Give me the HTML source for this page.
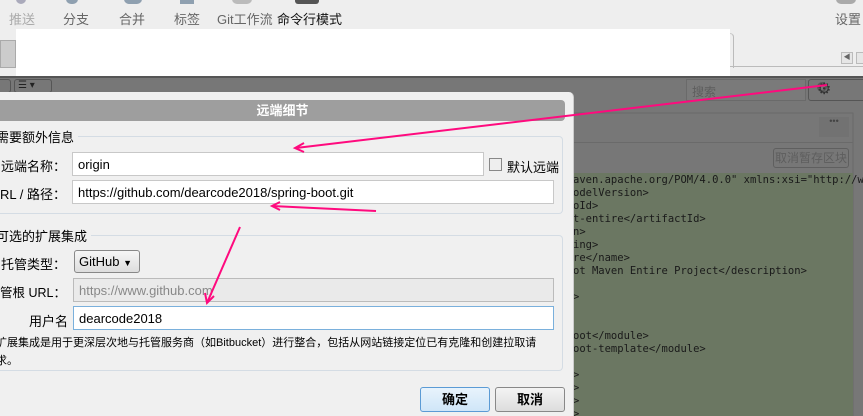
<!DOCTYPE html>
<html><head><meta charset="utf-8"><style>
*{margin:0;padding:0;box-sizing:border-box}
html,body{width:863px;height:416px;overflow:hidden}
body{position:relative;background:#eeeeee;font-family:"Liberation Sans","Noto Sans CJK SC",sans-serif;font-size:13px;color:#000}
.a{position:absolute}
.tb{font-size:13px;color:#666;top:9px}
.inp{position:absolute;background:#fff;border:1px solid #c8c8c8;height:24px;font-size:13px;padding:4px 5px;white-space:nowrap;overflow:hidden}
.lbl{position:absolute;font-size:13px;text-align:right;white-space:nowrap}
.code{position:absolute;left:573px;font-family:"DejaVu Sans Mono","Liberation Mono",monospace;font-size:10.5px;color:#1a1a1a;white-space:pre;line-height:13px}
</style></head><body>
<svg class="a" style="left:0;top:0" width="863" height="416">
<rect x="0" y="76" width="863" height="340" fill="#777777"/>
<rect x="573" y="113" width="280" height="303" fill="none" stroke="#6a6a6a"/>
<rect x="573" y="173" width="280" height="243" fill="#6b7762"/>
<rect x="0" y="76" width="863" height="2" fill="#555555"/>
</svg>
<div class="a" style="left:16px;top:-6px;width:10px;height:10px;border-radius:5px;background:#aab"></div>
<div class="a" style="left:66px;top:-6px;width:12px;height:10px;border-radius:5px;background:#8fa0b0"></div>
<div class="a" style="left:124px;top:-6px;width:18px;height:10px;border-radius:5px;background:#8fa0b0"></div>
<div class="a" style="left:180px;top:-6px;width:14px;height:10px;background:#8fa0b0"></div>
<div class="a" style="left:232px;top:-6px;width:20px;height:10px;border-radius:5px;background:#bbb"></div>
<div class="a" style="left:295px;top:-6px;width:24px;height:10px;border-radius:3px;background:#555"></div>
<div class="a" style="left:836px;top:-6px;width:20px;height:10px;border-radius:5px;background:#aaa"></div>
<div class="a tb" style="left:9px;color:#aaa">推送</div>
<div class="a tb" style="left:63px">分支</div>
<div class="a tb" style="left:119px">合并</div>
<div class="a tb" style="left:174px">标签</div>
<div class="a tb" style="left:217px">Git工作流</div>
<div class="a tb" style="left:277px;color:#111">命令行模式</div>
<div class="a tb" style="left:835px">设置</div>
<div class="a" style="left:0;top:40px;width:16px;height:28px;background:#ccc;border:1px solid #aaa"></div>
<div class="a" style="left:16px;top:29px;width:714px;height:47px;background:#fff"></div>
<div class="a" style="left:730px;top:33px;width:4px;height:35px;border-right:1px solid #bbb;border-top:1px solid #ccc;border-top-right-radius:4px"></div>
<div class="a" style="left:730px;top:66px;width:133px;height:1px;background:#bbb"></div>
<div class="a" style="left:841px;top:52px;width:12px;height:12px;border:1px solid #bbb;background:#e6e6e6;font-size:7px;color:#666;text-align:center;line-height:10px">◀</div>
<div class="a" style="left:856px;top:52px;width:8px;height:12px;border:1px solid #bbb;background:#e6e6e6"></div>
<div class="a" style="left:-4px;top:79px;width:15px;height:14px;border:1px solid #555;border-radius:3px"></div>
<div class="a" style="left:14px;top:79px;width:38px;height:14px;border:1px solid #555;border-radius:3px;font-size:10px;color:#222;line-height:12px;padding-left:3px">☰ ▾</div>
<div class="a" style="left:686px;top:79px;width:120px;height:22px;border:1px solid #6a6a6a;background:#7a7a7a;color:#5e5e5e;font-size:12px;padding:3px 5px">搜索</div>
<div class="a" style="left:817px;top:82px;width:10px;height:10px;border:2px solid #5a5a5a;border-radius:50%"></div>
<div class="a" style="left:808px;top:79px;width:60px;height:22px;border:1px solid #555;border-radius:3px;font-size:16px;color:#333;padding-left:8px;line-height:20px">⚙</div>
<div class="a" style="left:819px;top:117px;width:30px;height:20px;background:#727272;color:#444;font-size:9px;text-align:center;line-height:8px">•••</div>
<div class="a" style="left:573px;top:142px;width:280px;height:1px;background:#6a6a6a"></div>
<div class="a" style="left:773px;top:148px;width:76px;height:20px;border:1px solid #5f5f5f;border-radius:3px;color:#5e5e5e;font-size:12px;text-align:center;line-height:18px">取消暂存区块</div>
<div class="code" style="top:174px">aven.apache.org/POM/4.0.0" xmlns:xsi="http://ww
odelVersion>
oId>
t-entire&lt;/artifactId>
n>
ing>
re&lt;/name>
ot Maven Entire Project&lt;/description>

>


oot&lt;/module>
oot-template&lt;/module>

>
>
>
></div>
<div class="a" style="left:0;top:92px;width:574px;height:324px;background:#f0f0f0;border-top-right-radius:5px;border-right:1px solid #ccc"></div>
<div class="a" style="left:0;top:100px;width:565px;height:21px;background:#9e9e9e;border-radius:0 4px 4px 0;color:#fff;font-weight:bold;font-size:13px;text-align:center;line-height:21px">远端细节</div>
<div class="a" style="left:0;top:136px;width:563px;height:78px;border:1px solid #d4dce4;border-left:none;border-radius:0 4px 4px 0"></div>
<div class="a" style="left:-4px;top:127px;background:#f0f0f0;padding:0 4px 0 0;font-size:13px">需要额外信息</div>
<div class="lbl" style="right:797px;top:156px">远端名称：</div>
<div class="inp" style="left:72px;top:152px;width:412px">origin</div>
<div class="a" style="left:489px;top:158px;width:13px;height:13px;border:1px solid #888;background:#eee"></div>
<div class="a" style="left:507px;top:157px;font-size:13px">默认远端</div>
<div class="lbl" style="right:797px;top:184px">URL / 路径：</div>
<div class="inp" style="left:72px;top:180px;width:482px">https://github.com/dearcode2018/spring-boot.git</div>
<div class="a" style="left:0;top:235px;width:563px;height:136px;border:1px solid #d4dce4;border-left:none;border-radius:0 4px 4px 0"></div>
<div class="a" style="left:-4px;top:226px;background:#f0f0f0;padding:0 4px 0 0;font-size:13px">可选的扩展集成</div>
<div class="lbl" style="right:797px;top:254px">托管类型：</div>
<div class="a" style="left:74px;top:250px;width:66px;height:23px;border:1px solid #888;border-radius:3px;background:linear-gradient(#f6f6f6,#ddd);font-size:13px;padding:3px 4px;white-space:nowrap">GitHub <span style="font-size:9px">▼</span></div>
<div class="lbl" style="right:797px;top:282px;font-size:12.5px">托管根 URL：</div>
<div class="inp" style="left:73px;top:278px;width:481px;background:#eaeaea;color:#888;border-color:#bbb">https://www.github.com</div>
<div class="lbl" style="right:795px;top:311px">用户名</div>
<div class="inp" style="left:73px;top:306px;width:481px;border-color:#7ab0dc">dearcode2018</div>
<div class="a" style="left:-4px;top:334px;font-size:11px;line-height:18px;white-space:nowrap">扩展集成是用于更深层次地与托管服务商（如Bitbucket）进行整合，包括从网站链接定位已有克隆和创建拉取请<br>求。</div>
<div class="a" style="left:420px;top:387px;width:70px;height:25px;border:1px solid #5b9bd5;border-radius:3px;background:linear-gradient(#e8f3fc,#cfe6f8);font-weight:bold;text-align:center;line-height:23px">确定</div>
<div class="a" style="left:495px;top:387px;width:70px;height:25px;border:1px solid #888;border-radius:3px;background:linear-gradient(#f4f4f4,#ddd);font-weight:bold;text-align:center;line-height:23px">取消</div>
<svg class="a" style="left:0;top:0" width="863" height="416">
<g stroke="#ff0a7e" stroke-width="2" fill="none">
<line x1="827" y1="85" x2="296" y2="148"/>
<polyline points="304,143 295,148 304,152"/>
<line x1="376" y1="211" x2="272" y2="206"/>
<polyline points="280,202 272,206 280,210"/>
<line x1="240" y1="227" x2="207" y2="303"/>
<polyline points="205,293 207,303 214,296"/>
</g></svg>
</body></html>
